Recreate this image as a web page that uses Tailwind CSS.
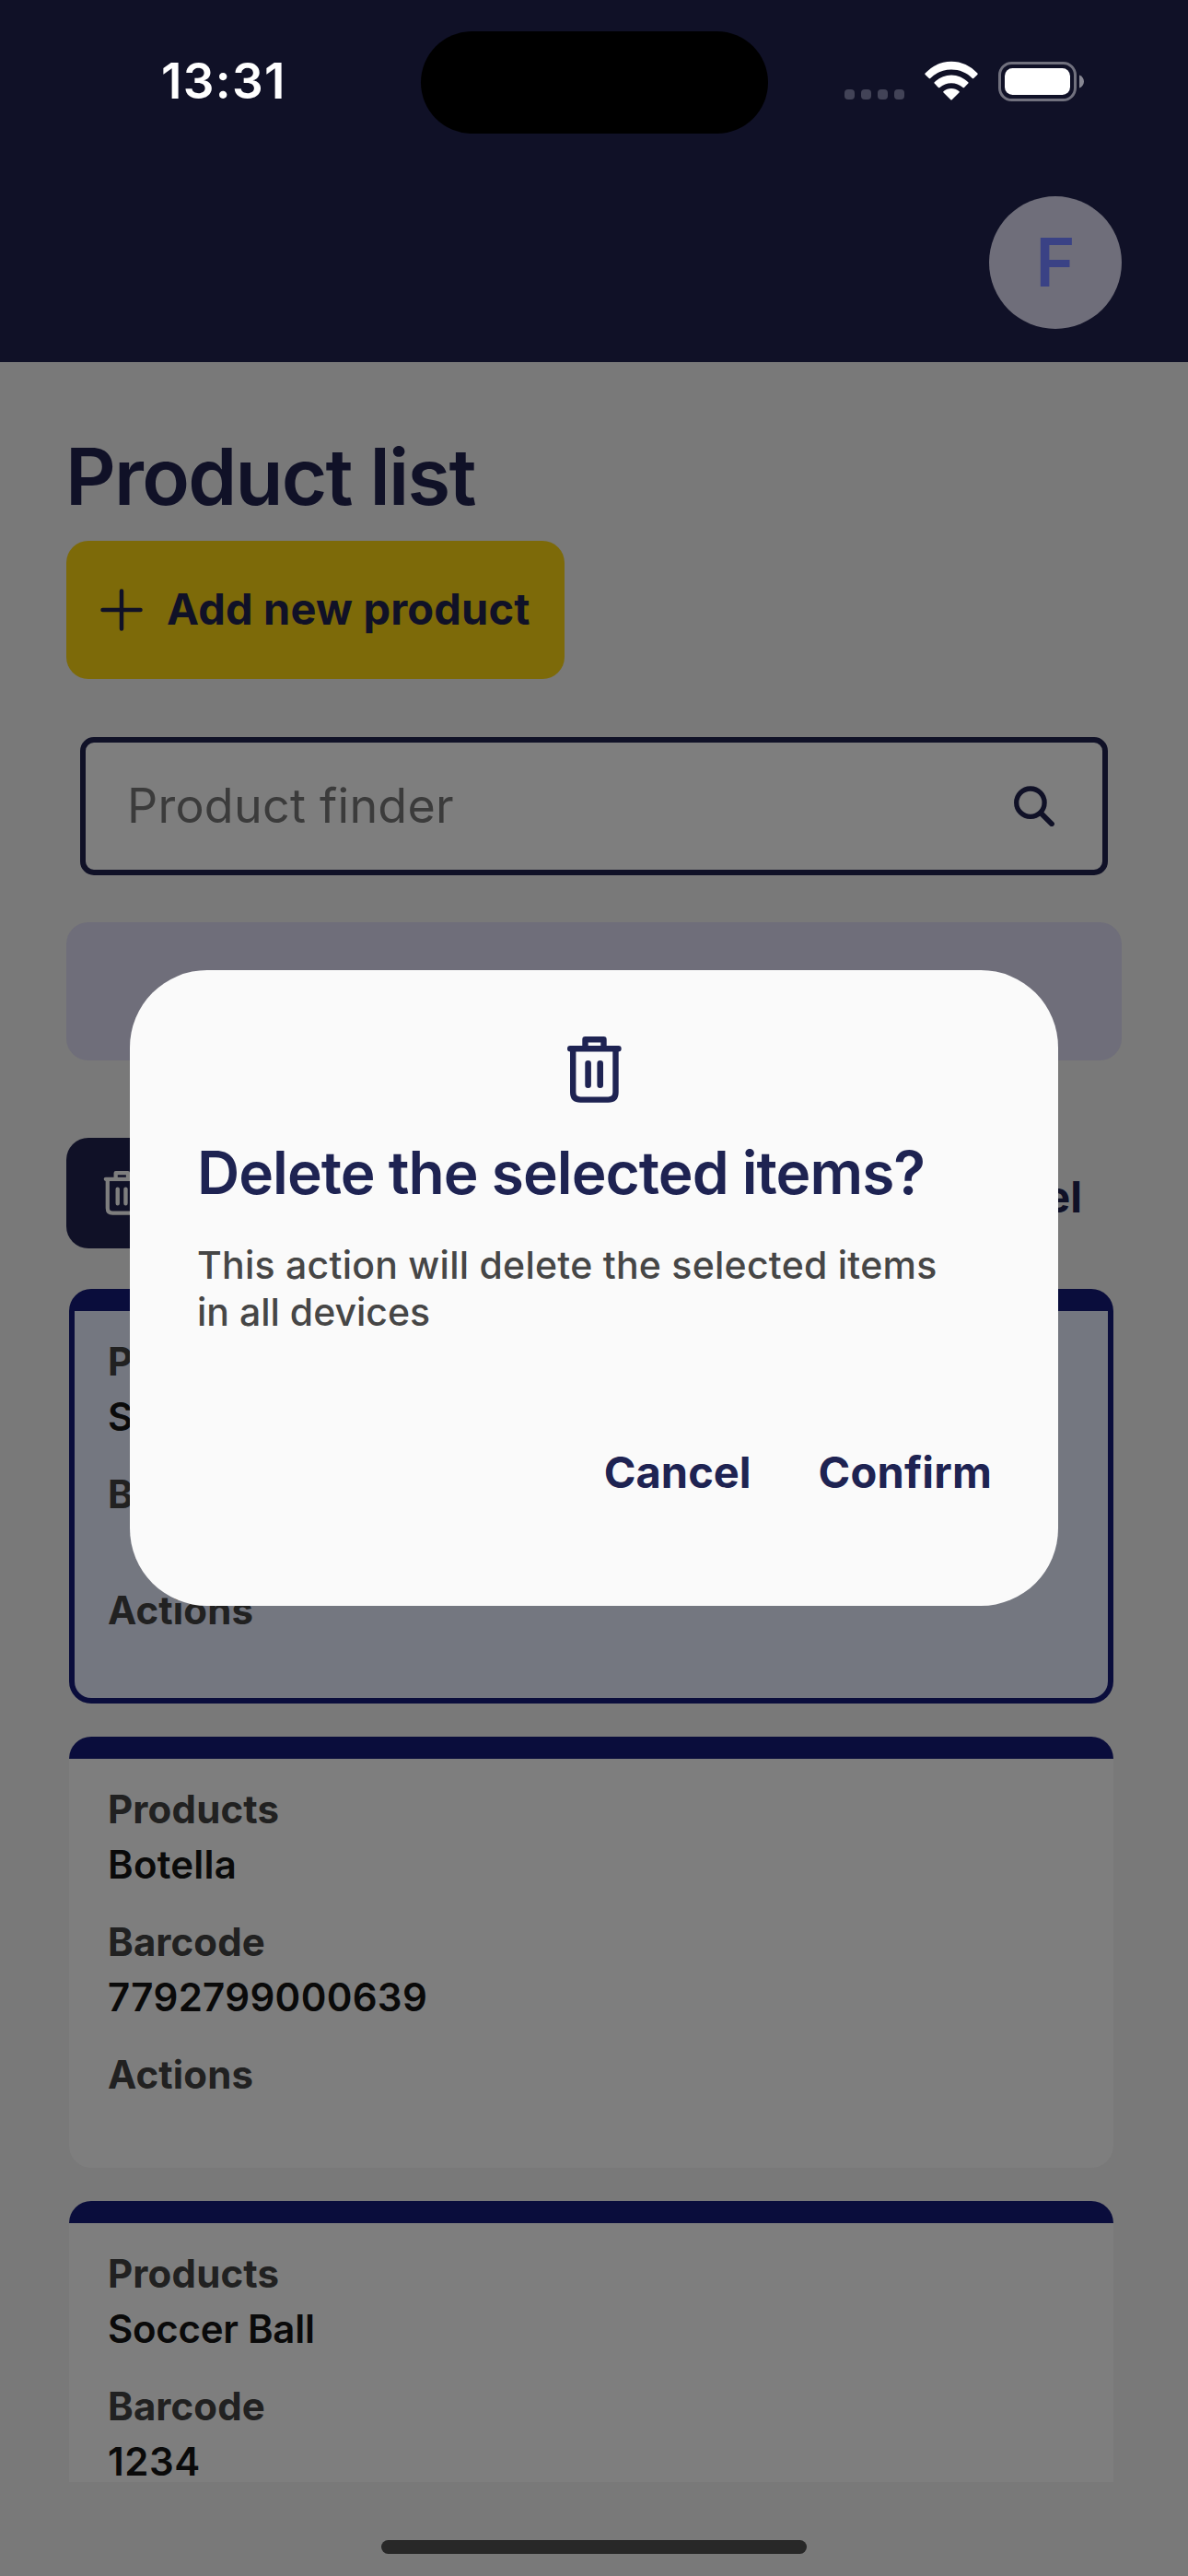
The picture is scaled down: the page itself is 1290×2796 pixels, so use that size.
<!DOCTYPE html>
<html lang="en">
<head>
<meta charset="utf-8">
<title>Product list</title>
<script src="https://cdn.jsdelivr.net/npm/@tailwindcss/browser@4"></script>
</head>
<body class="bg-[#797979]">
<svg class="hidden">
  <symbol id="trash" viewBox="0 0 60 72">
    <g fill="none" stroke="currentColor" stroke-linecap="round" stroke-linejoin="round">
      <path stroke-width="6.4" d="M4.2 13.2H56.5M20.5 12V3.2H40.5V12"/>
      <path stroke-width="6.4" d="M7.2 14V60.5Q7.2 68.6 15.3 68.6H45.4Q53.5 68.6 53.5 60.5V14"/>
      <path stroke-width="6.6" d="M23.6 29.4V52.8M36.7 29.4V52.8"/>
    </g>
  </symbol>
</svg>
<div class="relative w-[1290px] h-[2796px] overflow-hidden bg-[#797979] font-[Inter,sans-serif] text-[#101127]">

  <header class="h-[393px] bg-[#101127]">
    <div class="flex h-[176px] items-center pl-[175px] pr-[112px]">
      <span class="w-[282px] text-[53px] leading-[60px] font-semibold tracking-[1.3px] text-white">13:31</span>
      <span class="mt-[2px] h-[111px] w-[377px] rounded-full bg-black"></span>
      <div class="ml-auto flex h-[43px] items-end">
        <div class="mb-[2px] flex gap-[7px]">
          <i class="size-[11px] rounded-[4px] bg-[#424357]"></i><i class="size-[11px] rounded-[4px] bg-[#424357]"></i><i class="size-[11px] rounded-[4px] bg-[#424357]"></i><i class="size-[11px] rounded-[4px] bg-[#424357]"></i>
        </div>
        <svg class="mb-px ml-[22px] h-[43px] w-[58px]" viewBox="0 0 58 43" fill="#fff">
          <path d="M0.6 13.6C8.2 5.4 18 .8 29 .8S49.800 5.400 57.400 13.600Q58 14.300 57.400 15L53.200 19Q52.500 19.600 51.800 18.900C45.600 12.900 37.800 9.600 29 9.600S12.400 12.900 6.200 18.900Q5.500 19.600 4.800 19L.6 15Q0 14.300.6 13.600Z"/>
          <path d="M10.700 23.200C15.800 18.200 22.100 15.400 29 15.400S42.200 18.200 47.300 23.200Q48 23.900 47.300 24.600L43 28.900Q42.300 29.500 41.600 28.900C38 25.800 33.700 24.200 29 24.200S20 25.800 16.400 28.900Q15.700 29.500 15 28.900L10.700 24.600Q10 23.900 10.700 23.200Z"/>
          <path d="M20.600 32.900C23 30.900 25.900 29.900 29 29.900S35 30.900 37.400 32.900Q38.200 33.600 37.500 34.400L29.700 42.200Q29 42.900 28.300 42.200L20.500 34.400Q19.800 33.600 20.600 32.900Z"/>
        </svg>
        <svg class="ml-[22px] h-[43px] w-[94px]" viewBox="0 0 94 43">
          <rect x="1.500" y="1.500" width="82" height="40" rx="13" fill="none" stroke="#71717e" stroke-width="3"/>
          <rect x="7" y="7" width="71" height="29" rx="8.500" fill="#fff"/>
          <path d="M88 14.500C91 15.500 93 18.300 93 21.500S91 27.500 88 28.500Z" fill="#888893"/>
        </svg>
      </div>
    </div>
    <div class="mt-[37px] flex justify-end pr-[72px]">
      <div class="flex size-[144px] items-center justify-center rounded-full bg-[#6f6e7a] pb-px text-[73px] leading-none font-semibold text-[#3a4285]">F</div>
    </div>
  </header>

  <main class="px-[72px] pt-[77px]">
    <h1 class="ml-[-1px] h-[96px] text-[85px] leading-[96px] font-semibold tracking-[-1.750px]">Product list</h1>
    <button class="mt-[21px] flex h-[150px] w-[541px] items-center gap-[26px] rounded-[24px] bg-[#7d6a09] pl-[37px]">
      <svg class="size-[46px]" viewBox="0 0 46 46" fill="none" stroke="currentColor" stroke-width="4.500" stroke-linecap="round"><path d="M23 2.500V43.500M2.500 23H43.500"/></svg>
      <span class="pb-0.5 text-[47px] leading-[60px] font-bold tracking-[0.160px] whitespace-nowrap">Add new product</span>
    </button>

    <div class="mx-[15px] mt-[63px] flex h-[150px] items-center justify-between rounded-[15px] border-[6px] border-[#101127] bg-[#7e7e7e] pr-[52px] pl-[45px]">
      <span class="pb-px text-[52px] leading-[60px] tracking-[0.250px] text-[#3b3b3b]">Product finder</span>
      <svg class="size-[44px]" viewBox="0 0 44 44" fill="none" stroke="currentColor" stroke-linecap="round"><circle cx="17.900" cy="18.200" r="15.200" stroke-width="5.300"/><path stroke-width="5.800" d="M29.500 29.700L41 41.300"/></svg>
    </div>

    <div class="mt-[51px] h-[150px] rounded-[24px] bg-[#6f6e7a]"></div>

    <div class="mt-[84px] flex h-[120px] items-center justify-between">
      <div class="flex h-[120px] w-[300px] items-center rounded-[24px] bg-[#101127] pl-[40px] text-[#7e7e7e]">
        <svg class="h-[48px] w-[40px]"><use href="#trash"/></svg>
      </div>
      <span class="pt-2 pr-[43px] text-[47px] leading-[60px] font-bold">Cancel</span>
    </div>

    <div class="mt-[44px] ml-[3px] flex h-[1295px] w-[1134px] flex-col gap-[36px] overflow-hidden text-[42px] leading-[60px] font-semibold text-[#0a0a0a]">
      <section class="h-[450px] shrink-0 rounded-[24px] border-[6px] border-t-[24px] border-[#0a0d3c] bg-[#747780] pt-[25px] pl-[36px]">
        <p class="font-bold tracking-[0.150px] text-[#212121]">Products</p>
        <p class="mb-6">S</p>
        <p class="font-bold tracking-[0.100px] text-[#212121]">Barcode</p>
        <p class="mb-6 h-[42px]"></p>
        <p class="font-bold tracking-[0.120px] text-[#212121]">Actions</p>
      </section>
      <section class="h-[468px] shrink-0 overflow-hidden rounded-[24px] bg-[#7e7e7e]">
        <div class="h-6 bg-[#0a0d3c]"></div>
        <div class="pt-[25px] pl-[42px]">
          <p class="font-bold tracking-[0.150px] text-[#212121]">Products</p>
          <p class="mb-6 tracking-[0.200px]">Botella</p>
          <p class="font-bold tracking-[0.100px] text-[#212121]">Barcode</p>
          <p class="mb-6 tracking-[0.320px]">7792799000639</p>
          <p class="font-bold tracking-[0.120px] text-[#212121]">Actions</p>
        </div>
      </section>
      <section class="h-[468px] shrink-0 overflow-hidden rounded-[24px] bg-[#7e7e7e]">
        <div class="h-6 bg-[#0a0d3c]"></div>
        <div class="pt-[25px] pl-[42px]">
          <p class="font-bold tracking-[0.150px] text-[#212121]">Products</p>
          <p class="mb-6 tracking-[-0.280px]">Soccer Ball</p>
          <p class="font-bold tracking-[0.100px] text-[#212121]">Barcode</p>
          <p class="mb-6 tracking-[0.500px]">1234</p>
        </div>
      </section>
    </div>
  </main>

  <div class="absolute bottom-[24px] left-[414px] h-[15px] w-[462px] rounded-full bg-[#282828]"></div>

  <div class="absolute inset-0 flex items-center justify-center">
    <div role="dialog" class="flex h-[690px] w-[1008px] flex-col rounded-[84px] bg-[#fafafa] px-[73px] pt-[72px] text-[#1e2352]">
      <svg class="h-[72px] w-[60px] self-center"><use href="#trash"/></svg>
      <h2 class="mt-[36px] text-[64px] leading-[80px] font-semibold tracking-[-0.970px] whitespace-nowrap">Delete the selected items?</h2>
      <p class="mt-[35px] text-[41px] leading-[51px] font-medium tracking-[0.250px] whitespace-nowrap text-[#464646]">This action will delete the selected items<br><span class="tracking-[0px]">in all devices</span></p>
      <div class="mt-[118px] -mr-px flex justify-end gap-[73px] text-[47px] leading-[60px] font-bold">
        <span>Cancel</span><span class="tracking-[0.200px]">Confirm</span>
      </div>
    </div>
  </div>
</div>
</body>
</html>
